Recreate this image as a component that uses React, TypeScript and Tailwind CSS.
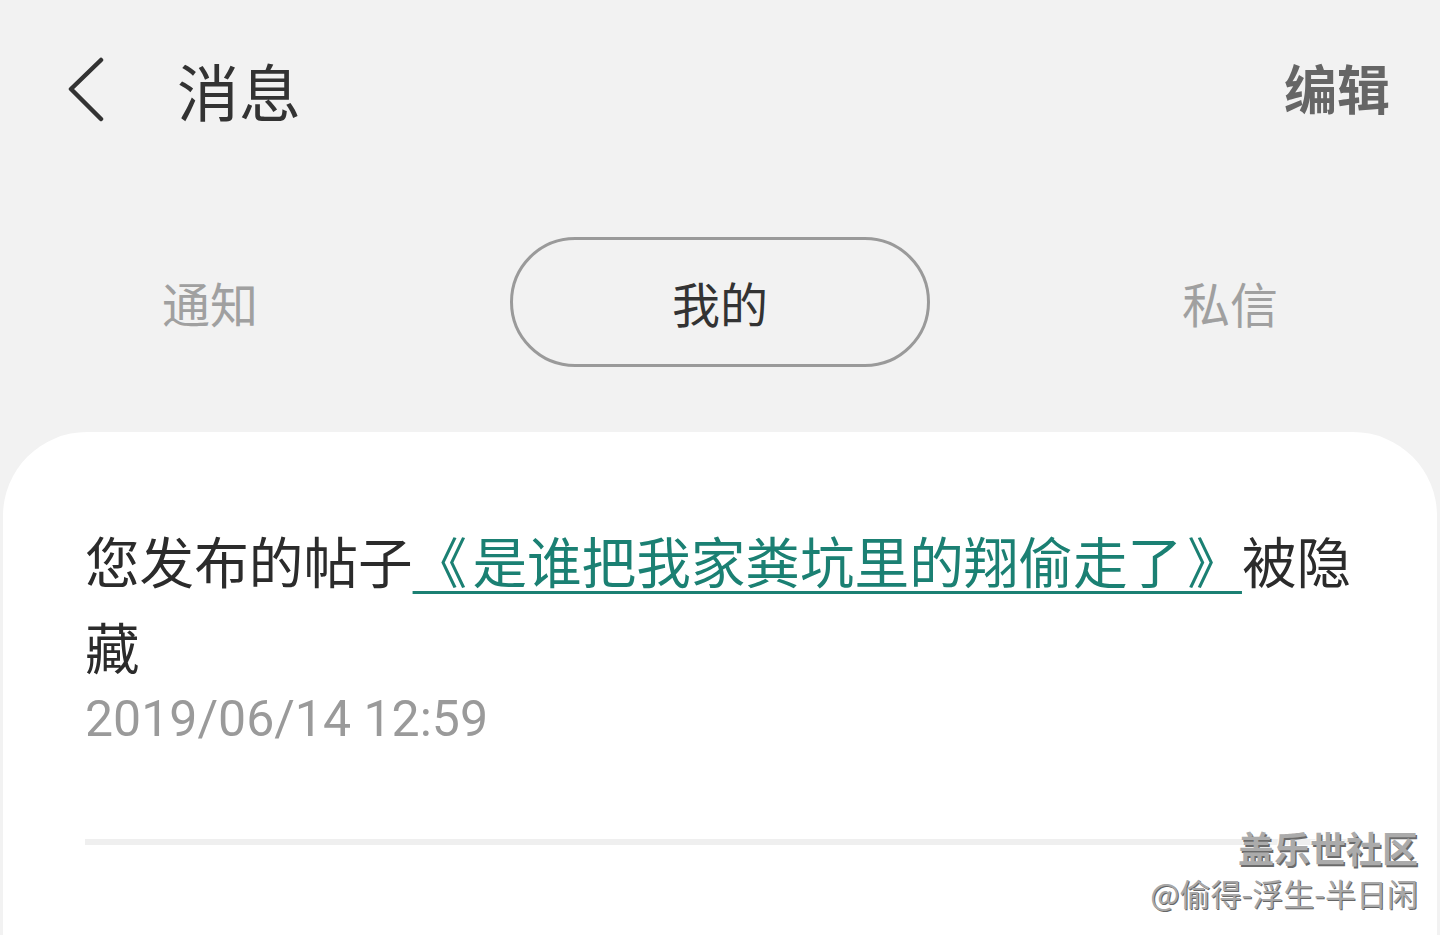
const cjk = "font-['Noto_Sans_CJK_SC','Noto_Sans',sans-serif]";

function BackIcon() {
    return (
        <svg width="40" height="66" viewBox="0 0 40 66" fill="none" aria-hidden>
            <path
                d="M34 3 L4 32 L34 62"
                stroke="#333333"
                strokeWidth="4.5"
                strokeLinecap="round"
                strokeLinejoin="round"
            />
        </svg>
    );
}

function Tab({ label, active }: { label: string; active?: boolean }) {
    return (
        <div className="flex h-[130px] w-[420px] items-center justify-center">
            {active ? (
                <div className="flex h-full w-full items-center justify-center rounded-full border-[3px] border-[#9a9a9a] text-[48px] text-[#333333]">
                    {label}
                </div>
            ) : (
                <span className="text-[48px] text-[#a0a0a0]">{label}</span>
            )}
        </div>
    );
}

export default function App() {
    return (
        <div className={`relative flex h-[935px] flex-col overflow-hidden bg-[#f2f2f2] ${cjk}`}>
            {/* Header */}
            <header className="flex h-[180px] shrink-0 items-center justify-between pl-[67px] pr-[50px]">
                <div className="flex items-center">
                    <BackIcon />
                    <h1 className="ml-[70px] text-[62px] leading-none text-[#333333]">消息</h1>
                </div>
                <button className="-mt-[6px] text-[53px] font-bold leading-none text-[#666666]">
                    编辑
                </button>
            </header>

            {/* Tabs */}
            <nav className="mt-[57px] flex shrink-0 justify-center gap-[90px]">
                <Tab label="通知" />
                <Tab label="我的" active />
                <Tab label="私信" />
            </nav>

            {/* Card */}
            <section className="mx-[3px] mt-[65px] flex-1 rounded-t-[84px] bg-white pl-[82px] pr-[70px] pt-[85px]">
                <p className="w-[1290px] text-[54.6px] leading-[86px] text-[#2b2b2b]">
                    您发布的帖子
                    <a className="text-[#1b8073] underline decoration-[3px] underline-offset-[8px] [word-spacing:-7px]">
                        《 是谁把我家粪坑里的翔偷走了 》
                    </a>
                    被隐藏
                </p>
                <p className="font-['Roboto',sans-serif] text-[50px] leading-[60px] text-[#9a9a9a]">
                    2019/06/14 12:59
                </p>
                <div className="mt-[90px] h-[6px] w-[1270px] bg-[#efefef]" />
            </section>

            {/* Watermark */}
            <div className="absolute bottom-[22px] right-[22px] flex flex-col items-end">
                <span className="text-[36px] font-bold leading-[44px] text-[#ababab] [text-shadow:1.5px_1.5px_0_#6a6a6a,-1px_-1px_0_#ffffff]">
                    盖乐世社区
                </span>
                <span className="mt-[4px] text-[31px] leading-[40px] text-[#a8a8a8] [text-shadow:1px_1px_0_#666666,-1px_-1px_0_#ffffff]">
                    @偷得-浮生-半日闲
                </span>
            </div>
        </div>
    );
}
